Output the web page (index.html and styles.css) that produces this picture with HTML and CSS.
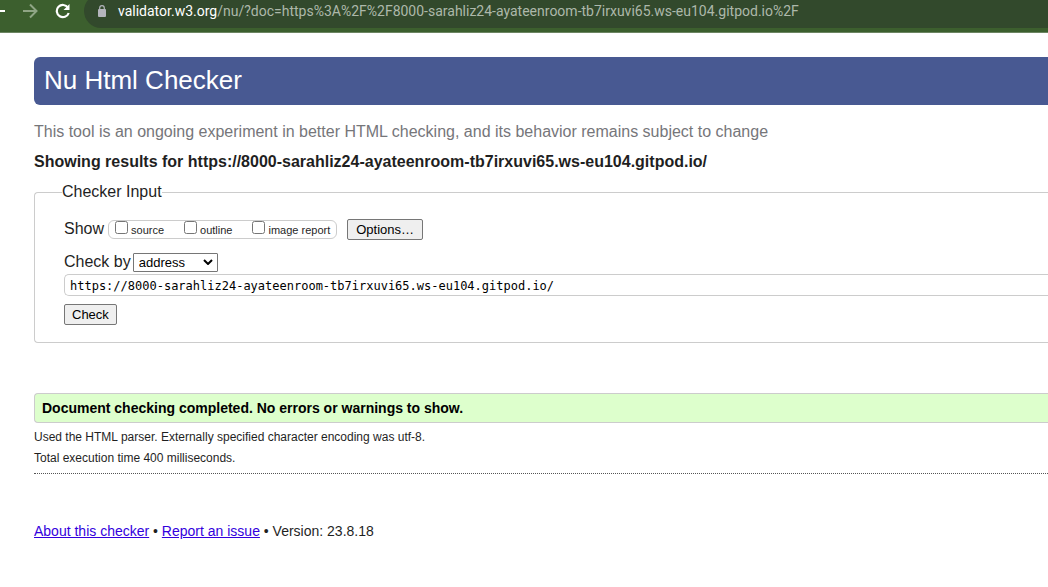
FILE: index.html
```html
<!DOCTYPE html>
<html lang="en">
<head>
<meta charset="utf-8">
<title>Nu Html Checker</title>
<link rel="stylesheet" href="styles.css">
</head>
<body>
<header class="browser">
  <svg class="back" width="5" height="16" viewBox="0 0 5 16" aria-hidden="true"><path d="M0 8h5" stroke="#fff" stroke-width="2"/></svg>
  <svg class="forward" width="16" height="16" viewBox="0 0 16 16" fill="none" stroke="#8fa585" stroke-width="2" aria-hidden="true"><path d="M1 8h13M8 1.500l6.500 6.500-6.500 6.500"/></svg>
  <svg class="reload" width="16" height="16" viewBox="0 0 16 16" fill="none" aria-hidden="true"><path d="M13 4.700A6.100 6.100 0 1 0 13.700 10" stroke="#fff" stroke-width="2.200"/><path d="M14.500 1v6h-6z" fill="#fff"/></svg>
  <div class="omnibox">
    <svg class="lock" width="8" height="12" viewBox="0 0 8 12" aria-hidden="true"><path d="M1.700 5V3a2.300 2.300 0 0 1 4.600 0v2" fill="none" stroke="#b4b5bd" stroke-width="1.200"/><rect y="4" width="8" height="8" rx="1" fill="#b4b5bd"/></svg>
    <span class="url"><span class="host">validator.w3.org</span>/nu/?doc=https%3A%2F%2F8000-sarahliz24-ayateenroom-tb7irxuvi65.ws-eu104.gitpod.io%2F</span>
  </div>
</header>
<main class="page">
  <h1 class="title">Nu Html Checker</h1>
  <p class="note">This tool is an ongoing experiment in better HTML checking, and its behavior remains subject to change</p>
  <h2 class="showing">Showing results for https://8000-sarahliz24-ayateenroom-tb7irxuvi65.ws-eu104.gitpod.io/</h2>
  <form>
    <fieldset class="checker">
      <legend>Checker Input</legend>
      <div class="row show-row">
        <span class="row-label">Show</span>
        <div class="checks">
          <label><input type="checkbox">source</label>
          <label><input type="checkbox">outline</label>
          <label><input type="checkbox">image report</label>
        </div>
        <button type="button" class="button options">Options…</button>
      </div>
      <div class="row">
        <label class="row-label" for="method">Check by</label>
        <div class="select-wrap">
          <select id="method"><option>address</option><option>file upload</option><option>text input</option></select>
          <svg class="chevron" width="10" height="6" viewBox="0 0 10 6" fill="none" stroke="#000" stroke-width="2" aria-hidden="true"><path d="M1 1l4 4 4-4"/></svg>
        </div>
      </div>
      <input class="address" type="text" aria-label="Address" value="https://8000-sarahliz24-ayateenroom-tb7irxuvi65.ws-eu104.gitpod.io/">
      <button type="button" class="button">Check</button>
    </fieldset>
  </form>
  <p class="success">Document checking completed. No errors or warnings to show.</p>
  <p class="detail">Used the HTML parser. Externally specified character encoding was utf-8.</p>
  <p class="detail">Total execution time 400 milliseconds.</p>
  <hr class="rule">
  <footer class="footer"><a href="#about">About this checker</a> • <a href="#issue">Report an issue</a> • Version: 23.8.18</footer>
</main>
</body>
</html>
```
FILE: styles.css
```css
* {
  box-sizing: border-box;
}

body {
  margin: 0;
  background: #fff;
  color: #1f1f1f;
  font-family: "Liberation Sans", Arial, sans-serif;
  font-size: 16px;
  line-height: 20px;
  overflow-x: hidden;
}

.browser {
  display: flex;
  height: 33px;
  overflow: hidden;
  background: #3c5f2e;
  border-bottom: 1px solid #6c8562;
}

.browser > svg {
  flex: none;
  margin-top: 3px;
}

.forward {
  margin-left: 17px;
}

.reload {
  margin-left: 17px;
}

.omnibox {
  display: flex;
  flex: 1;
  align-items: center;
  gap: 12px;
  height: 34px;
  margin: -6px 0 0 13px;
  padding-left: 14px;
  border-radius: 17px 0 0 17px;
  background: #32492c;
}

.lock {
  flex: none;
}

.url {
  color: #adb8aa;
  font-family: Roboto, "Noto Sans", sans-serif;
  font-size: 14px;
  white-space: nowrap;
}

.host {
  color: #fff;
}

.page {
  padding: 24px 0 24px 34px;
}

.title {
  margin: 0;
  padding: 8px 10px 10px;
  border-radius: 6px 0 0 6px;
  background: #485992;
  color: #fff;
  font-size: 26px;
  font-weight: normal;
  line-height: 30px;
}

.note {
  margin: 17px 0 10px;
  color: #76767a;
}

.showing {
  margin: 0 0 10px;
  font-size: 16px;
  line-height: 20px;
}

.checker {
  min-width: 0;
  margin: 0;
  padding: 17px 0 17px 29px;
  border: 1px solid #ccc;
  border-right: 0;
  border-radius: 4px 0 0 4px;
}

.checker legend {
  margin-left: -2px;
  padding: 0;
}

.row {
  display: flex;
  align-items: center;
}

.show-row {
  margin-bottom: 12px;
}

.show-row .row-label {
  line-height: 18px;
  padding-bottom: 2px;
}

.checks {
  display: flex;
  gap: 20px;
  height: 19px;
  margin: 0 10px 0 4px;
  padding: 0 6px;
  border: 1px solid #ccc;
  border-radius: 6px;
  font-size: 11px;
  line-height: 19px;
}

.checks label {
  display: flex;
}

.checks input {
  width: 13px;
  height: 13px;
  margin: 0 3px 0 0;
}

.button {
  display: block;
  height: 21px;
  padding: 0 7px;
  border: 1px solid #767676;
  border-radius: 2px;
  background: #efefef;
  color: #000;
  font: 13px/19px "Liberation Sans", Arial, sans-serif;
}

.options {
  padding: 0 8px;
}

.select-wrap {
  position: relative;
  margin-left: 2px;
}

.select-wrap select {
  display: block;
  width: 85px;
  height: 19px;
  padding: 0 5px;
  appearance: none;
  border: 1px solid #767676;
  border-radius: 1px;
  background: #fff;
  color: #000;
  font: 13px/17px "Liberation Sans", Arial, sans-serif;
}

.chevron {
  position: absolute;
  top: 6px;
  right: 5px;
  pointer-events: none;
}

.address {
  display: block;
  width: 100%;
  height: 22px;
  margin: 2px 0 8px;
  padding: 1px 5px 0;
  border: 1px solid #ccc;
  border-right: 0;
  border-radius: 5px 0 0 5px;
  color: #000;
  font-family: "DejaVu Sans Mono", monospace;
  font-size: 12px;
}

.success {
  margin: 50px 0 4px;
  padding: 4px 7px;
  border: 1px solid #ccc;
  border-right: 0;
  border-radius: 4px 0 0 4px;
  background: #dfc;
  color: #000;
  font-size: 14px;
  font-weight: bold;
}

.detail {
  margin: 0 0 1px;
  font-size: 12px;
}

.rule {
  margin: 5px 0 47px;
  border: 0;
  border-top: 1px dotted #555;
}

.footer {
  font-size: 14px;
}

.footer a {
  color: #3300dd;
}
```
